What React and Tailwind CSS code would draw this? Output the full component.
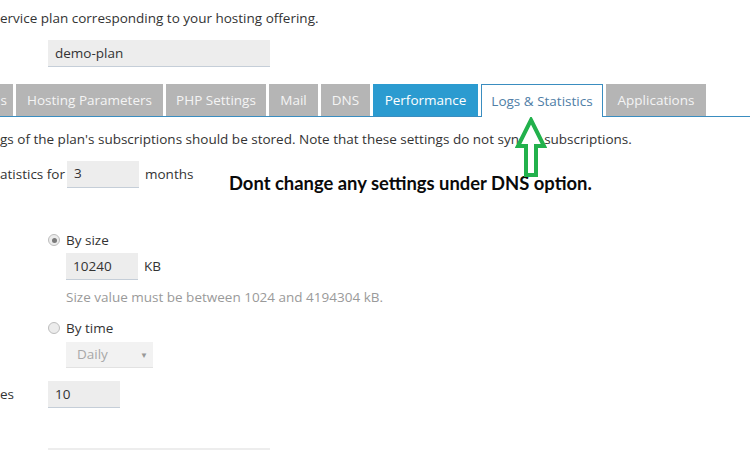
import React from "react";

const Tab = ({ w, children, kind = "gray", end = false }) => {
  const base =
    "h-[32px] flex items-center whitespace-nowrap overflow-hidden text-[13.5px] shrink-0";
  const styles = {
    gray: "bg-[#b5b5b5] text-[#f4f4f4] justify-center",
    blue: "bg-[#2b9bd0] text-white justify-center",
    active:
      "bg-white text-[#4f7ea6] justify-center border border-b-0 border-[#3a8dc0] h-[33px] -mb-px relative z-10",
  };
  return (
    <div className={`${base} ${styles[kind]} ${end ? "!justify-end pr-[6px]" : ""}`} style={{ width: w }}>
      {children}
    </div>
  );
};

const Input = ({ w, value }) => (
  <div
    className={`h-[27px] bg-[#ededed] border-b border-[#c5ced8] flex items-center pl-[7px] text-[13.5px] text-[#333]`}
    style={{ width: w }}
  >
    {value}
  </div>
);

const Radio = ({ checked }) => (
  <div className="w-[12px] h-[12px] rounded-full border border-[#bdbdbd] bg-[#ececec] flex items-center justify-center shrink-0">
    {checked && <div className="w-[5px] h-[5px] rounded-full bg-[#7a7a7a]" />}
  </div>
);

export default function App() {
  return (
    <div
      className="relative w-[750px] h-[450px] overflow-hidden bg-white text-[#333] text-[13.5px]"
      style={{ fontFamily: '"Open Sans", "Liberation Sans", sans-serif' }}
    >
      <div className="mt-[8px] h-[20px] leading-[20px] whitespace-nowrap">
        ervice plan corresponding to your hosting offering.
      </div>
      <div className="mt-[12px] ml-[48px]">
        <Input w="222px" value="demo-plan" />
      </div>

      <div className="mt-[17px] flex gap-[3px] border-b border-[#3a8dc0] h-[33px] items-start">
        <Tab w="13px" end>
          s
        </Tab>
        <Tab w="147px">Hosting Parameters</Tab>
        <Tab w="100px">PHP Settings</Tab>
        <Tab w="49px">Mail</Tab>
        <Tab w="49px">DNS</Tab>
        <Tab w="105px" kind="blue">
          Performance
        </Tab>
        <Tab w="122px" kind="active">
          Logs &amp; Statistics
        </Tab>
        <Tab w="100px">Applications</Tab>
      </div>

      <div className="mt-[12px] h-[20px] leading-[20px] whitespace-nowrap">
        gs of the plan's subscriptions should be stored. Note that these settings do not sync in subscriptions.
      </div>

      <div className="mt-[12px] flex items-center h-[26px]">
        <span className="w-[67px] whitespace-nowrap">atistics for</span>
        <Input w="72px" value="3" />
        <span className="ml-[6px]">months</span>
      </div>

      <div className="mt-[43px] ml-[48px] flex items-center h-[20px] gap-[6px]">
        <Radio checked />
        <span>By size</span>
      </div>
      <div className="mt-[3px] ml-[66px] flex items-center">
        <Input w="72px" value="10240" />
        <span className="ml-[6px]">KB</span>
      </div>
      <div className="mt-[7px] ml-[66px] h-[20px] leading-[20px] text-[#9a9a9a] whitespace-nowrap">
        Size value must be between 1024 and 4194304 kB.
      </div>

      <div className="mt-[11px] ml-[48px] flex items-center h-[20px] gap-[6px]">
        <Radio />
        <span>By time</span>
      </div>
      <div className="mt-[4px] ml-[66px] w-[87px] h-[26px] bg-[#f2f2f2] border-b border-[#e2e2e2] flex items-center justify-between pl-[11px] pr-[5px] text-[#a8a8a8]">
        <span>Daily</span>
        <span className="text-[8px] text-[#999]">▼</span>
      </div>

      <div className="mt-[13px] flex items-center">
        <span className="w-[48px]">es</span>
        <Input w="72px" value="10" />
      </div>

      <div className="mt-[40px] ml-[48px] w-[222px] h-[27px] bg-[#ededed]" />

      <div
        className="absolute left-[229px] top-[171px] text-[18.4px] leading-[24px] font-bold text-[#0a0a0a] whitespace-nowrap"
        style={{ fontFamily: 'Lato, "Liberation Sans", sans-serif' }}
      >
        Dont change any settings under DNS option.
      </div>

      <svg className="absolute left-[515px] top-[117px]" width="32" height="62" viewBox="0 0 32 62">
        <polygon
          points="16,3 29,29 21,29 21,58 11,58 11,29 3,29"
          fill="white"
          stroke="#22b14c"
          strokeWidth="4"
          strokeLinejoin="miter"
        />
      </svg>
    </div>
  );
}
